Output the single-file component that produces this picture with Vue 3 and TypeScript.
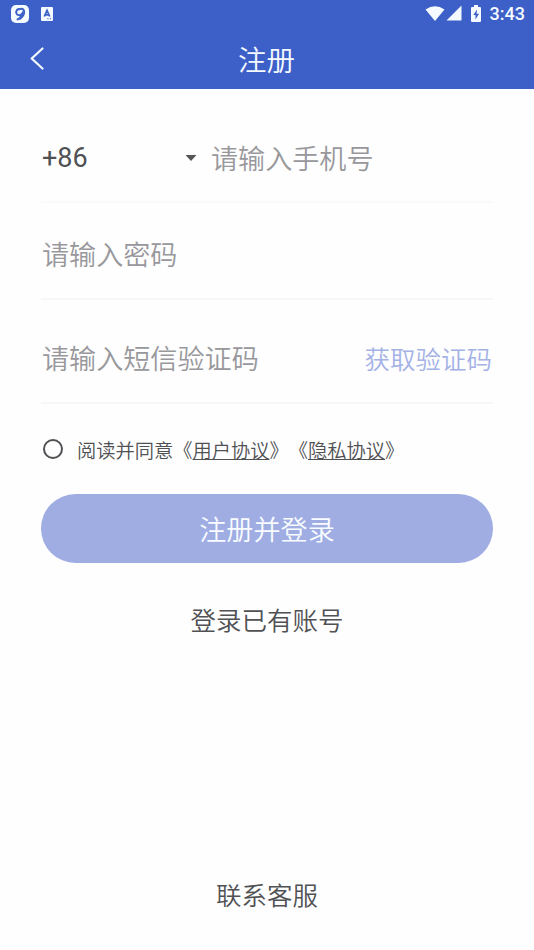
<script setup lang="ts">
import { ref } from 'vue'

interface Agreement {
  id: string
  name: string
}

const dialCode = ref<string>('+86')
const agreed = ref<boolean>(false)
const agreements: Agreement[] = [
  { id: 'user', name: '用户协议' },
  { id: 'privacy', name: '隐私协议' },
]
</script>

<template>
  <div class="screen" lang="zh-CN">
    <header class="top">
      <div class="status">
        <div class="status-left">
          <svg class="app-icon" width="18" height="18" viewBox="0 0 18 18">
            <rect width="18" height="18" rx="5" fill="#f4faff" />
            <path d="M7.500 4C5 5 4.500 7.800 6 9.400c1.500 1.500 4 1 5.400-1.200C11.300 11 9.500 13 6.500 14.400" fill="none" stroke="#3d5fc8" stroke-width="2" stroke-linecap="round" />
            <path d="M8.500 4.200c3.500-1.700 5.500 1.300 4.500 4.600-.7 2.200-2 3.800-4 5" fill="none" stroke="#3d5fc8" stroke-width="2" stroke-linecap="round" />
          </svg>
          <svg class="lang-icon" width="12" height="14" viewBox="0 0 12 14">
            <rect width="12" height="14" rx="1" fill="#f4faff" />
            <path d="M3.300 9.500 6 3.500 8.700 9.500M4.200 7.800h3.600" fill="none" stroke="#3d5fc8" stroke-width="1.800" />
            <path d="M6.300 11.800h1.200M8.800 11.800H10" stroke="#3d5fc8" stroke-width="1" />
          </svg>
        </div>
        <div class="status-right">
          <svg width="20" height="15" viewBox="0 0 20 15">
            <path d="M.5 3.600Q10-3 19.500 3.600L10 15z" fill="#f4faff" />
          </svg>
          <svg class="signal" width="16" height="16" viewBox="0 0 16 16">
            <path d="M15.500.5v15H.5z" fill="#f4faff" />
          </svg>
          <svg class="battery" width="10" height="17" viewBox="0 0 10 17">
            <path d="M3 0h4v2h2q1 0 1 1v13q0 1-1 1H1q-1 0-1-1V3q0-1 1-1h2z" fill="#f4faff" />
            <path d="M6 4.500 2.300 10h2.200v4.500L8 8.700H5.600z" fill="#3d5fc8" />
          </svg>
          <span class="clock">3:43</span>
        </div>
      </div>
      <nav class="nav">
        <svg class="back" width="14" height="23" viewBox="0 0 14 23">
          <path d="M12.500 1.500 1.700 11.500l10.800 10" fill="none" stroke="#f4faff" stroke-width="2.200" stroke-linecap="round" stroke-linejoin="round" />
        </svg>
        <h1 class="title">注册</h1>
      </nav>
    </header>

    <main class="form">
      <div class="field phone">
        <div class="dial">
          <span>{{ dialCode }}</span>
          <svg width="12" height="6" viewBox="0 0 12 6">
            <path d="M.5 0h11L6 6z" fill="#555" />
          </svg>
        </div>
        <span class="hint">请输入手机号</span>
      </div>
      <div class="field password">
        <span class="hint">请输入密码</span>
      </div>
      <div class="field code">
        <span class="hint">请输入短信验证码</span>
        <span class="send">获取验证码</span>
      </div>
      <div class="agree" @click="agreed = !agreed">
        <span class="radio" :class="{ checked: agreed }"></span>
        <span>阅读并同意</span>
        <span v-for="item in agreements" :key="item.id">《<u>{{ item.name }}</u>》</span>
      </div>
      <button class="submit" type="button">注册并登录</button>
      <a class="login">登录已有账号</a>
    </main>

    <footer class="service">联系客服</footer>
  </div>
</template>

<style>
body {
  background: #fefefe;
}
</style>

<style scoped>
.screen {
  box-sizing: border-box;
  display: flex;
  flex-direction: column;
  height: 950px;
  overflow: hidden;
  background: #fefefe;
  color: #505154;
  font-family: "Noto Sans CJK SC DemiLight", "Noto Sans CJK SC", sans-serif;
  font-weight: 350;
  white-space: nowrap;
}
.top {
  height: 89px;
  background: #3d5fc8;
  color: #f4faff;
}
.status {
  display: flex;
  justify-content: space-between;
  height: 27px;
  padding: 0 9px 0 11px;
}
.status-left,
.status-right {
  display: flex;
  align-items: center;
}
.status-right {
  margin-top: -1px;
}
.lang-icon {
  margin-left: 12px;
}
.signal {
  margin-left: 1px;
}
.battery {
  margin-left: 9px;
}
.clock {
  margin-left: 9px;
  font-family: Roboto, sans-serif;
  font-size: 18px;
  font-weight: 500;
  line-height: 29px;
}
.nav {
  display: grid;
  grid-template-columns: 1fr auto 1fr;
  align-items: center;
  height: 62px;
  padding: 0 31px 0 30px;
}
.title {
  margin: 0;
  padding-top: 2px;
  font-size: 28.5px;
  font-weight: inherit;
  line-height: 60px;
}
.form {
  display: flex;
  flex-direction: column;
  padding: 0 41px;
}
.field {
  box-sizing: border-box;
  display: flex;
  align-items: center;
  border-bottom: 2px solid #f7f7f8;
}
.hint {
  color: #98989c;
  font-size: 27.1px;
  line-height: 40px;
}
.phone {
  height: 114px;
  padding-top: 25px;
  border-bottom-color: #fafafa;
}
.dial {
  box-sizing: border-box;
  display: flex;
  align-items: center;
  justify-content: space-between;
  width: 156px;
  margin-right: 14px;
  padding-left: 1px;
  font-family: Roboto, sans-serif;
  font-size: 27px;
  font-weight: 400;
  line-height: 40px;
}
.password {
  height: 97px;
  padding: 6px 0 0 1px;
}
.code {
  justify-content: space-between;
  height: 104px;
  padding: 14px 1px 0;
}
.send {
  color: #a4b2e6;
  font-size: 25.500px;
  line-height: 40px;
}
.agree {
  box-sizing: border-box;
  display: flex;
  align-items: center;
  height: 90px;
  padding-top: 2px;
  font-size: 19.250px;
}
.agree u {
  text-decoration-thickness: 1px;
  text-decoration-skip-ink: none;
  text-underline-offset: 1px;
}
.radio {
  box-sizing: border-box;
  width: 20px;
  height: 20px;
  margin: -2px 14px 0 2px;
  border: 2px solid #505154;
  border-radius: 50%;
}
.radio.checked {
  background: #3d5fc8;
}
.submit {
  height: 69px;
  padding: 0;
  border: 0;
  border-radius: 35px;
  background: #9fade3;
  color: #f8fcff;
  font: inherit;
  font-size: 27.100px;
  line-height: 69px;
}
.login {
  align-self: center;
  margin-top: 37px;
  font-size: 25.500px;
  line-height: 38px;
}
.service {
  margin-top: auto;
  padding-bottom: 37px;
  font-size: 25.500px;
  line-height: 38px;
  text-align: center;
}
</style>
